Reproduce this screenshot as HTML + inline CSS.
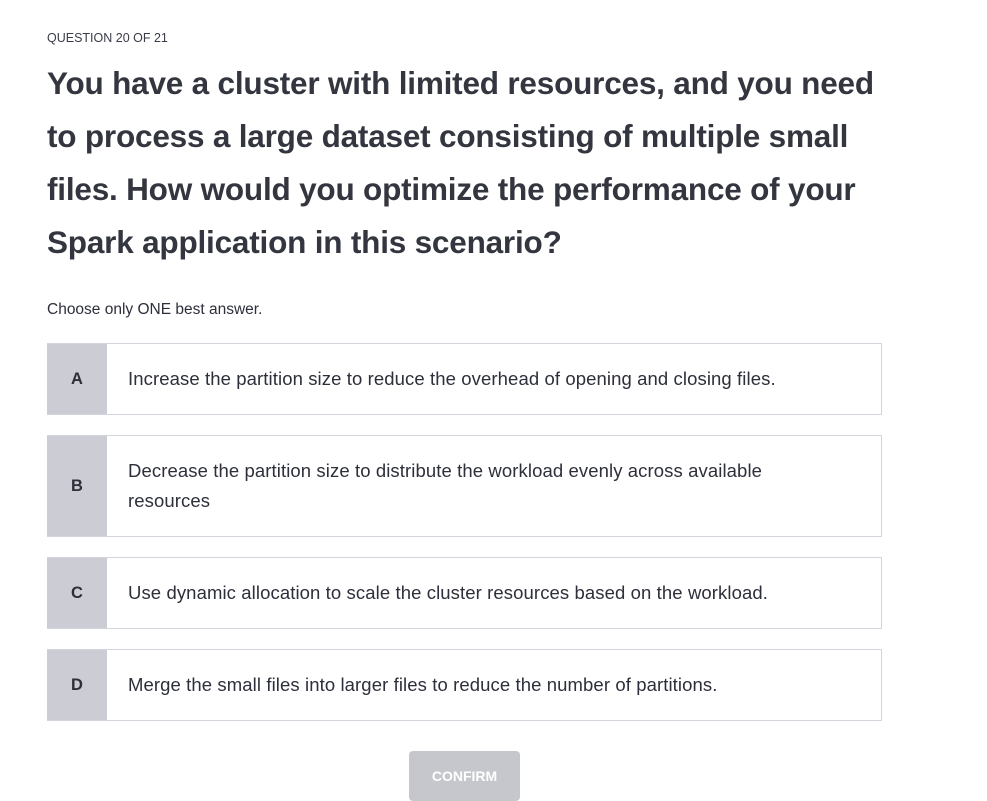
<!DOCTYPE html>
<html><head><style>
body{margin:0;background:#fff;font-family:"Liberation Sans",sans-serif;color:#2d2f3a;width:987px;height:797px;overflow:hidden;position:relative}
.q{position:absolute;left:47px;top:31px;font-size:12.5px;color:#3a3c48}
h1{position:absolute;left:47px;top:57px;margin:0;font-size:31.5px;line-height:53px;font-weight:bold;white-space:nowrap;color:#33353f;letter-spacing:-0.2px}
.c{position:absolute;left:47px;top:301px;font-size:15.5px;color:#2d2f3a}
.opt{position:absolute;left:47px;width:835px;border:1px solid #d4d5dc;border-left:none;background:#fff;display:flex;box-sizing:border-box}
.l{width:60px;background:#cbccd4;display:flex;align-items:center;justify-content:center;font-weight:bold;font-size:16.5px;color:#2d2f3a;flex:none;padding-top:1px}
.t{padding:0 20px 0 21px;font-size:18.5px;line-height:30px;display:flex;align-items:center;color:#2d2f3a;white-space:nowrap;letter-spacing:0.1px}
.btn{position:absolute;left:409px;top:751px;width:111px;height:50px;background:#c6c7cd;border-radius:4px;color:#fff;font-weight:bold;font-size:14px;text-align:center;line-height:50px}
</style></head><body>
<div class="q">QUESTION 20 OF 21</div>
<h1>You have a cluster with limited resources, and you need<br>to process a large dataset consisting of multiple small<br>files. How would you optimize the performance of your<br>Spark application in this scenario?</h1>
<div class="c">Choose only ONE best answer.</div>
<div class="opt" style="top:343px;height:72px"><div class="l">A</div><div class="t">Increase the partition size to reduce the overhead of opening and closing files.</div></div>
<div class="opt" style="top:435px;height:102px"><div class="l">B</div><div class="t">Decrease the partition size to distribute the workload evenly across available<br>resources</div></div>
<div class="opt" style="top:557px;height:72px"><div class="l">C</div><div class="t">Use dynamic allocation to scale the cluster resources based on the workload.</div></div>
<div class="opt" style="top:649px;height:72px"><div class="l">D</div><div class="t">Merge the small files into larger files to reduce the number of partitions.</div></div>
<div class="btn">CONFIRM</div>
</body></html>
